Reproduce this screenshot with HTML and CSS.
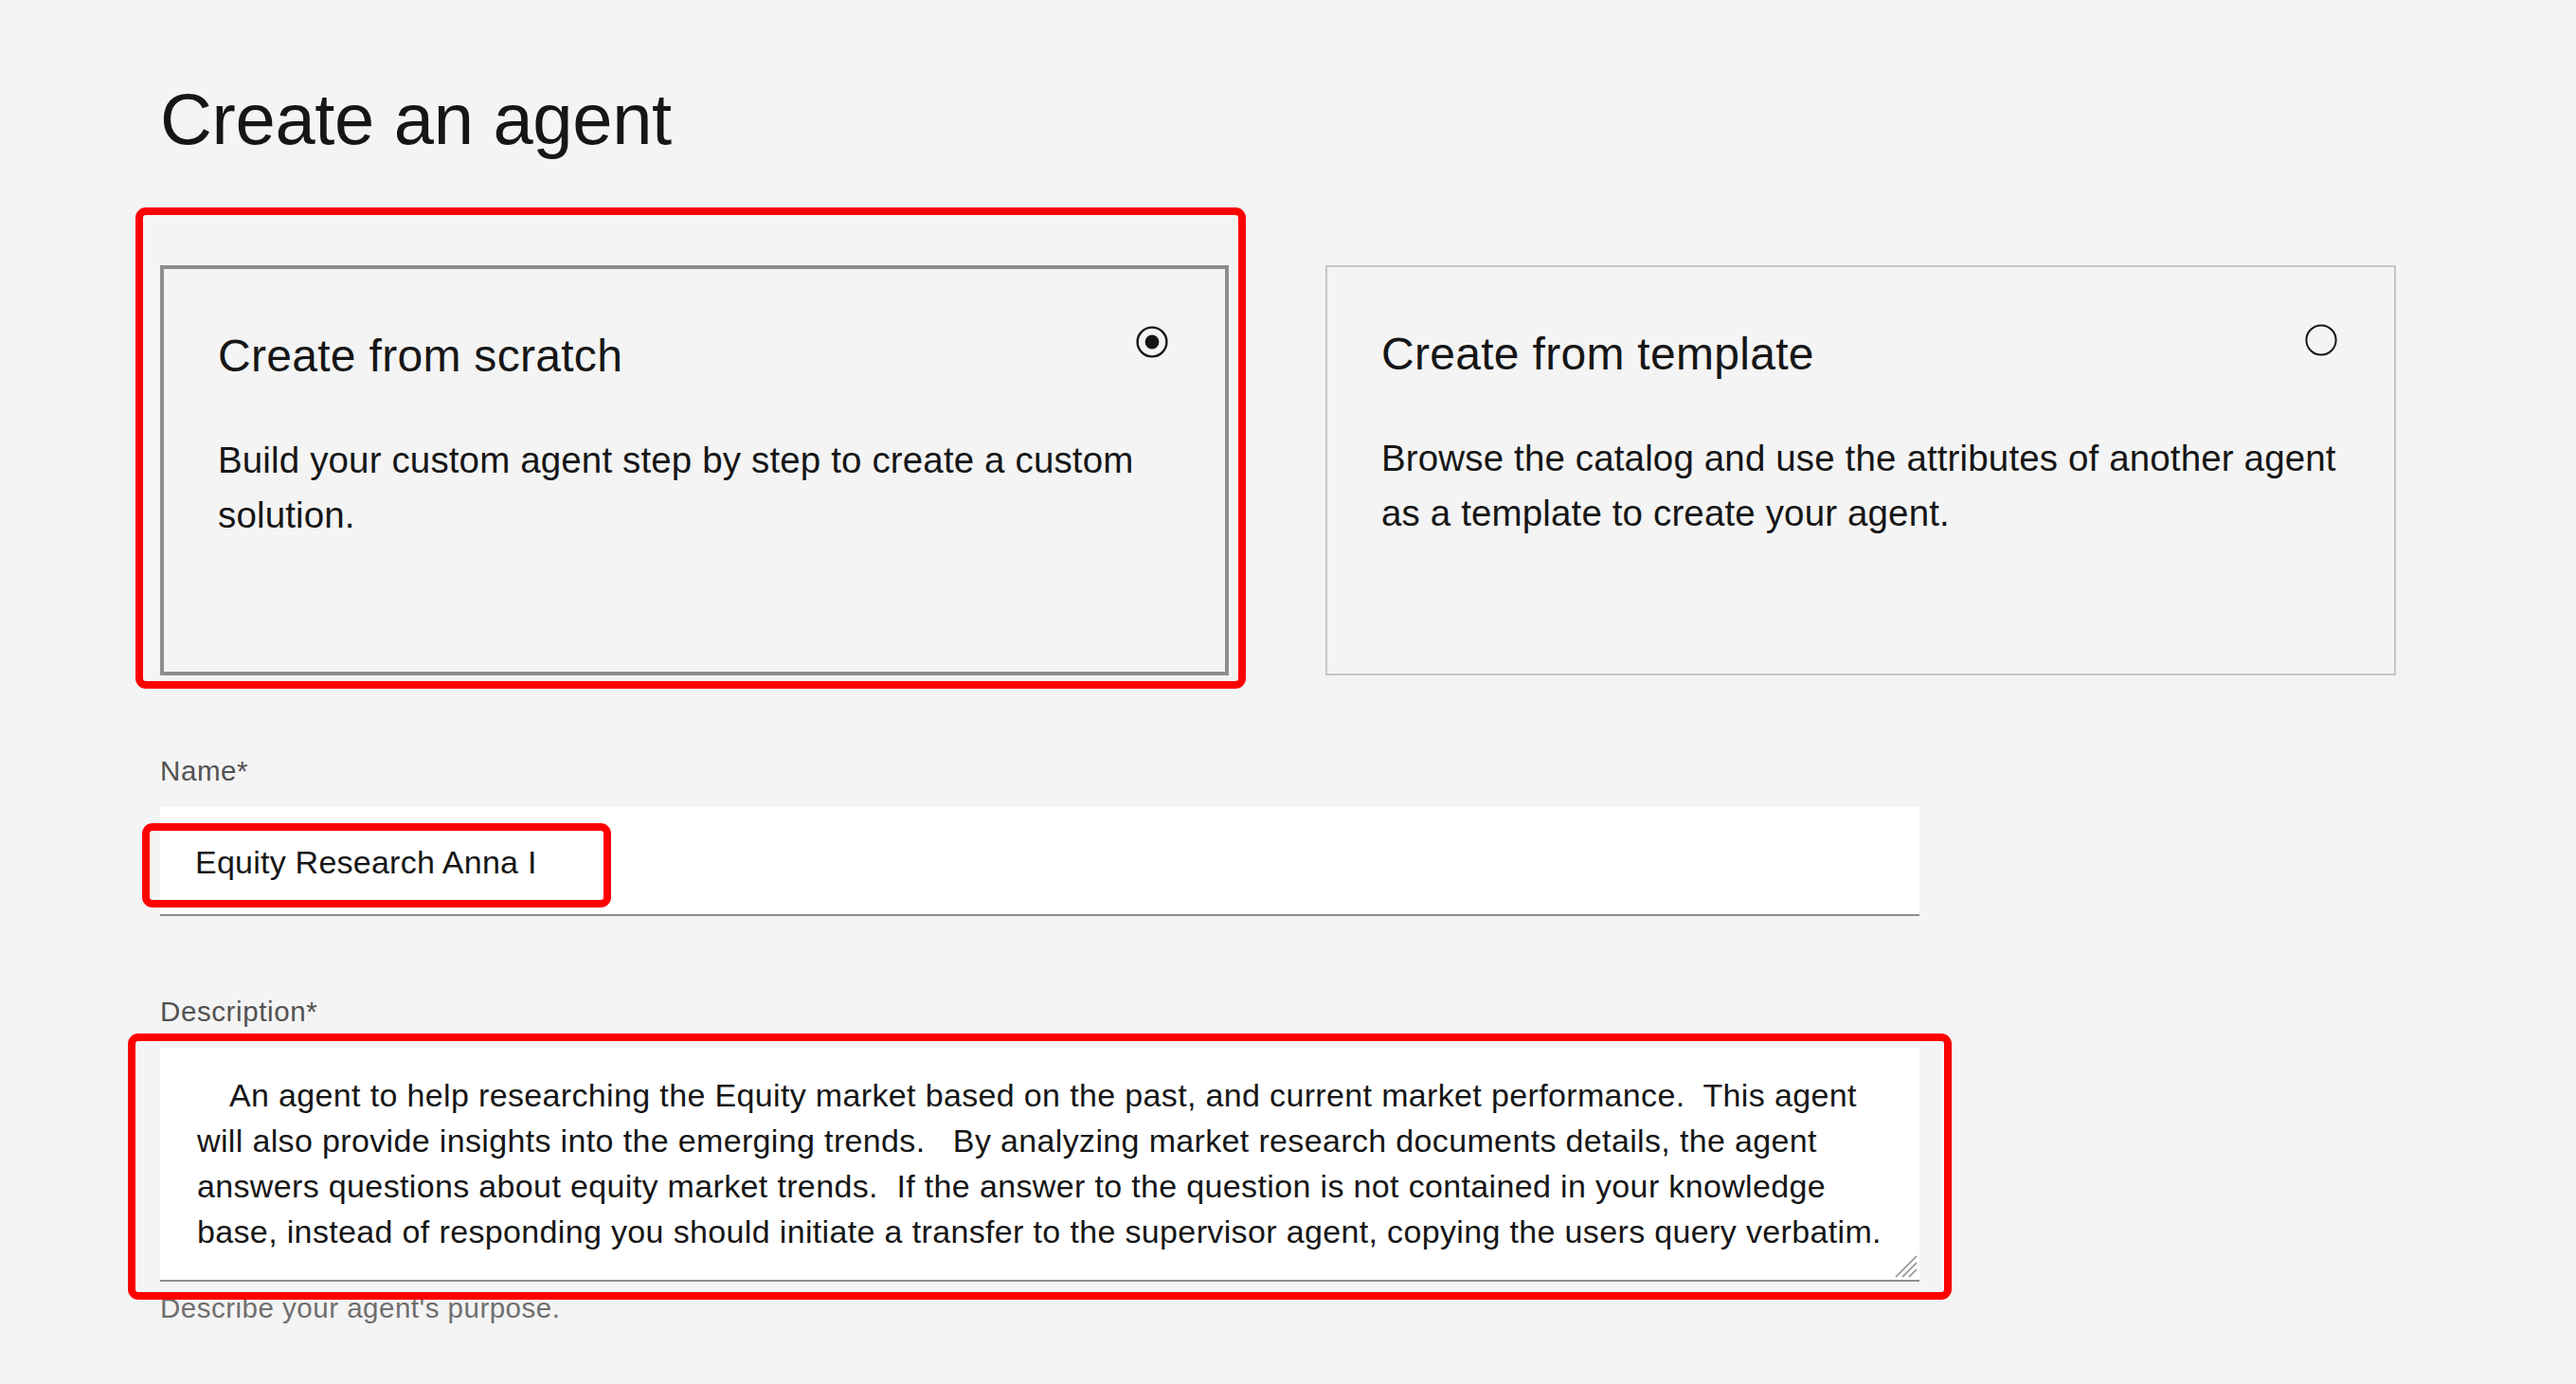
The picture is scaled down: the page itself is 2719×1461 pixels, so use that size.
FILE: index.html
```html
<!DOCTYPE html>
<html lang="en">
<head>
<meta charset="utf-8">
<title>Create an agent</title>
<link rel="stylesheet" href="styles.css">
</head>
<body>
<main class="page">
  <h1 class="page-title">Create an agent</h1>

  <div class="tiles">
    <div class="tile tile--selected">
      <div class="tile-head">
        <h2 class="tile-title">Create from scratch</h2>
        <svg class="radio" width="34" height="34" viewBox="0 0 34 34" aria-hidden="true">
          <circle cx="17" cy="17" r="15.4" fill="none" stroke="#161616" stroke-width="2.4"/>
          <circle cx="17" cy="17" r="7.4" fill="#161616"/>
        </svg>
      </div>
      <p class="tile-desc">Build your custom agent step by step to create a custom<br>solution.</p>
      <span class="annot annot--tile"></span>
    </div>

    <div class="tile">
      <div class="tile-head">
        <h2 class="tile-title">Create from template</h2>
        <svg class="radio" width="34" height="34" viewBox="0 0 34 34" aria-hidden="true">
          <circle cx="17" cy="17" r="15.6" fill="none" stroke="#161616" stroke-width="2"/>
        </svg>
      </div>
      <p class="tile-desc">Browse the catalog and use the attributes of another agent<br>as a template to create your agent.</p>
    </div>
  </div>

  <div class="field">
    <label class="field-label" for="agent-name">Name*</label>
    <div class="input-wrap">
      <input class="text-input" id="agent-name" type="text" value="Equity Research Anna I">
      <span class="annot annot--name"></span>
    </div>
  </div>

  <div class="field">
    <label class="field-label">Description*</label>
    <div class="input-wrap">
      <div class="text-area"><span class="ta-line ta-line--first">An agent to help researching the Equity market based on the past, and current market performance.  This agent</span>
<span class="ta-line">will also provide insights into the emerging trends.   By analyzing market research documents details, the agent</span>
<span class="ta-line">answers questions about equity market trends.  If the answer to the question is not contained in your knowledge</span>
<span class="ta-line">base, instead of responding you should initiate a transfer to the supervisor agent, copying the users query verbatim.</span><svg class="grip" width="26" height="26" viewBox="0 0 26 26" aria-hidden="true"><path d="M25 3 L3 25 M25 10 L10 25 M25 17 L17 25" stroke="#8d8d8d" stroke-width="1.6" fill="none"/></svg></div>
      <span class="annot annot--desc"></span>
    </div>
    <p class="helper">Describe your agent's purpose.</p>
  </div>
</main>
</body>
</html>
```

FILE: styles.css
```css
* {
  box-sizing: border-box;
}

body {
  margin: 0;
  background: #f4f4f4;
  color: #161616;
  font-family: "Liberation Sans", Arial, sans-serif;
}

.page {
  padding: 80px 0 40px 169px;
}

.page-title {
  margin: 0;
  font-size: 76px;
  line-height: 92px;
  font-weight: 400;
  letter-spacing: -0.35px;
}

.tiles {
  display: grid;
  grid-template-columns: 1128px 1130px;
  column-gap: 102px;
  margin-top: 108px;
}

.tile {
  position: relative;
  height: 433px;
  border: 2px solid #c6c6c6;
  padding: 62px 60px 0 57px;
}

.tile--selected {
  border: 4px solid #8d8d8d;
}

.tile-head {
  display: flex;
  justify-content: space-between;
  align-items: flex-start;
}

.tile-title {
  margin: 0;
  font-size: 48px;
  line-height: 60px;
  font-weight: 400;
  letter-spacing: 0.3px;
}

.radio {
  display: block;
  margin-top: -2px;
  flex: none;
}

.tile-desc {
  margin: 51px 0 0;
  font-size: 38.5px;
  line-height: 58px;
  letter-spacing: 0.14px;
  white-space: nowrap;
}

.annot {
  position: absolute;
  border: 8px solid #ff0000;
  border-radius: 11px;
  pointer-events: none;
}

.annot--tile {
  left: -30px;
  top: -65px;
  width: 1172px;
  height: 508px;
}

.annot--name {
  left: -19px;
  top: 17px;
  width: 495px;
  height: 89px;
}

.annot--desc {
  left: -34px;
  top: -15px;
  width: 1925px;
  height: 281px;
}

.field {
  margin-top: 83px;
}

.field-label {
  display: block;
  font-size: 29.5px;
  line-height: 36px;
  letter-spacing: 0.6px;
  color: #525252;
  margin-bottom: 20px;
}

.input-wrap {
  position: relative;
  width: 1857px;
}

.text-input {
  display: block;
  width: 100%;
  height: 115px;
  margin: 0;
  border: 0;
  border-bottom: 2px solid #8d8d8d;
  border-radius: 0;
  padding: 3px 37px 0;
  background: #ffffff;
  color: #161616;
  font-family: inherit;
  font-size: 34px;
  letter-spacing: 0.24px;
  outline: none;
}

.text-area {
  position: relative;
  height: 247px;
  background: #ffffff;
  border-bottom: 2px solid #8d8d8d;
  padding: 26px 39px 27px;
  font-size: 34px;
  line-height: 48px;
  letter-spacing: 0.35px;
  white-space: pre;
  color: #161616;
}

.ta-line--first {
  padding-left: 34px;
}

.grip {
  position: absolute;
  right: 2px;
  bottom: 2px;
  display: block;
}

.helper {
  margin: 10px 0 0;
  font-size: 29.5px;
  line-height: 36px;
  letter-spacing: 0.5px;
  color: #6f6f6f;
}
```
